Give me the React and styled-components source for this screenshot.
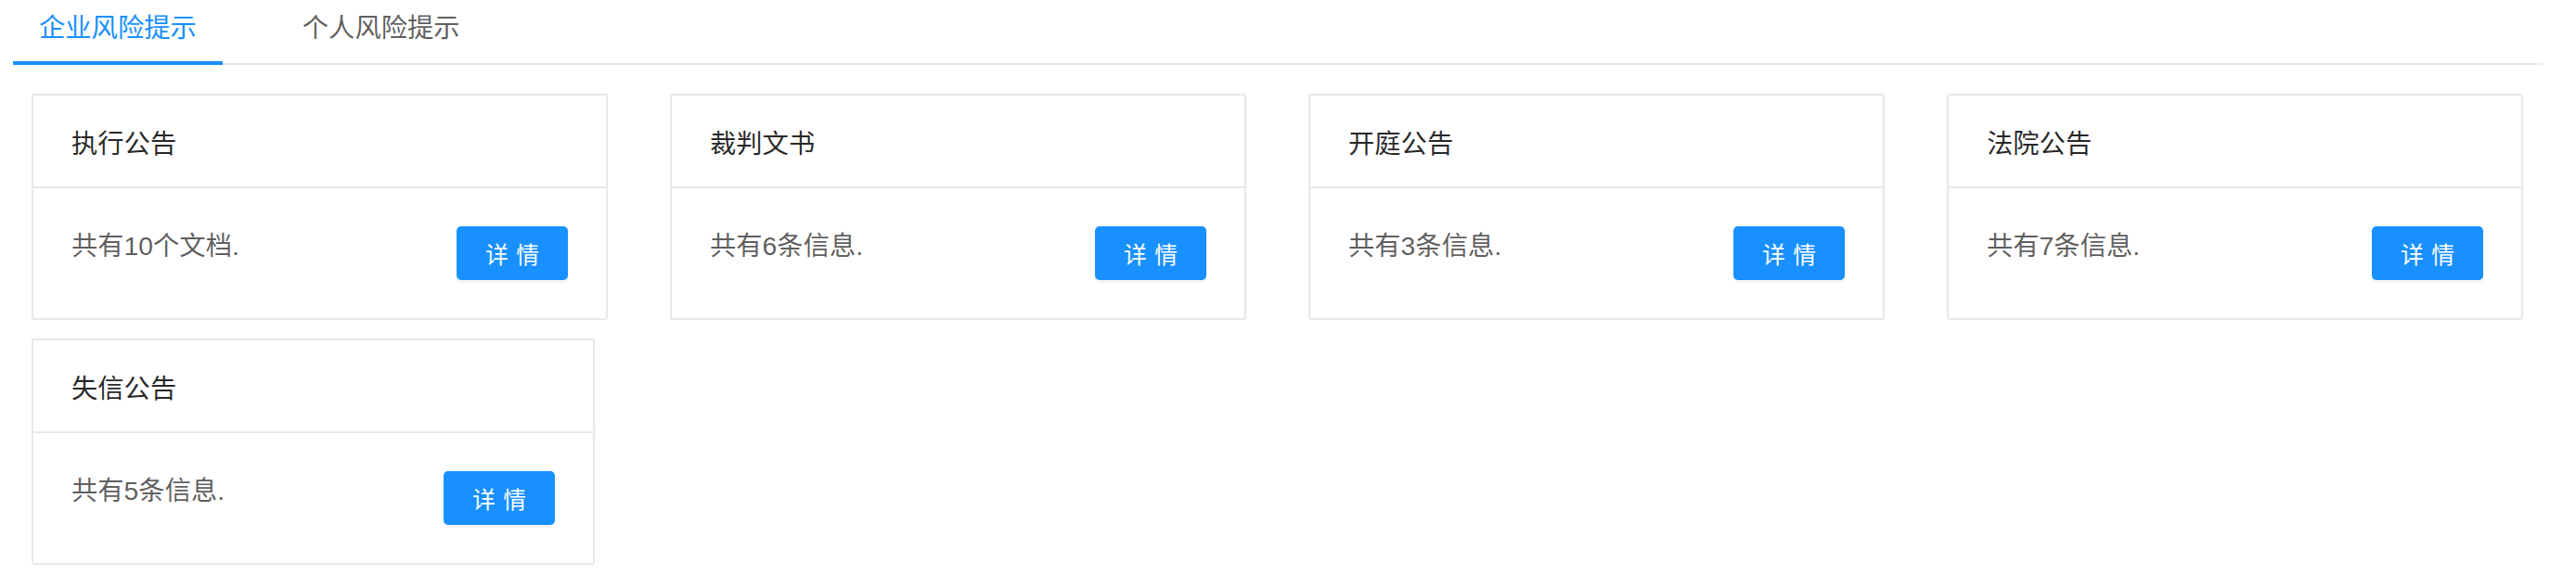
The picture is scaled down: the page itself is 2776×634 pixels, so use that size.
import React from 'react';
import styled, { createGlobalStyle, css } from 'styled-components';

const GlobalStyle = createGlobalStyle`
  html, body {
    margin: 0;
    padding: 0;
    background: #fff;
  }
  body {
    font-family: "Liberation Sans", "Noto Sans CJK SC", sans-serif;
    color: rgba(0, 0, 0, 0.65);
  }
`

const Page = styled.div`
  padding: 0 36px 0 14px;
`

const TabBar = styled.div`
  display: flex;
  border-bottom: 2px solid #e8e8e8;
`

const Tab = styled.div`
  font-size: 28.3px;
  line-height: 42px;
  padding: 9px 28px 15px;
  margin-right: 58px;
  margin-bottom: -2px;
  border-bottom: 4px solid transparent;
  color: rgba(0, 0, 0, 0.65);
  cursor: pointer;
  ${props => props.active && css`
    color: #1890ff;
    border-bottom-color: #1890ff;
  `}
`

const CardGrid = styled.div`
  display: grid;
  grid-template-columns: repeat(4, 621px);
  column-gap: 67px;
  row-gap: 20px;
  margin: 31px 0 0 20px;
  align-items: start;
`

const Card = styled.div`
  width: ${props => props.width}px;
  border: 2px solid #e8e8e8;
  border-radius: 3px;
  background: #fff;
  box-sizing: border-box;
`

const CardHead = styled.div`
  height: 98px;
  display: flex;
  align-items: center;
  padding: 0 41px;
  border-bottom: 2px solid #e8e8e8;
  font-size: 28.3px;
  color: rgba(0, 0, 0, 0.85);
`

const CardBody = styled.div`
  display: flex;
  justify-content: space-between;
  align-items: flex-start;
  padding: 41px;
`

const Summary = styled.div`
  font-size: 28.3px;
  line-height: 42px;
  color: rgba(0, 0, 0, 0.65);
`

const DetailButton = styled.button`
  width: 120px;
  height: 58px;
  border: none;
  border-radius: 5px;
  background: #1890ff;
  color: #fff;
  font-family: inherit;
  font-size: 24.8px;
  letter-spacing: 0.34em;
  text-indent: 0.34em;
  box-shadow: 0 3px 0 rgba(0, 0, 0, 0.045);
  cursor: pointer;
`

const cards = [
  { title: '执行公告', text: '共有10个文档.' },
  { title: '裁判文书', text: '共有6条信息.' },
  { title: '开庭公告', text: '共有3条信息.' },
  { title: '法院公告', text: '共有7条信息.' },
  { title: '失信公告', text: '共有5条信息.', width: 607 },
]

const App = () => {
  return (
    <Page>
      <GlobalStyle />
      <TabBar>
        <Tab active>企业风险提示</Tab>
        <Tab>个人风险提示</Tab>
      </TabBar>
      <CardGrid>
        {cards.map(card => (
          <Card key={card.title} width={card.width || 621}>
            <CardHead>{card.title}</CardHead>
            <CardBody>
              <Summary>{card.text}</Summary>
              <DetailButton>详情</DetailButton>
            </CardBody>
          </Card>
        ))}
      </CardGrid>
    </Page>
  )
}

export default App;
